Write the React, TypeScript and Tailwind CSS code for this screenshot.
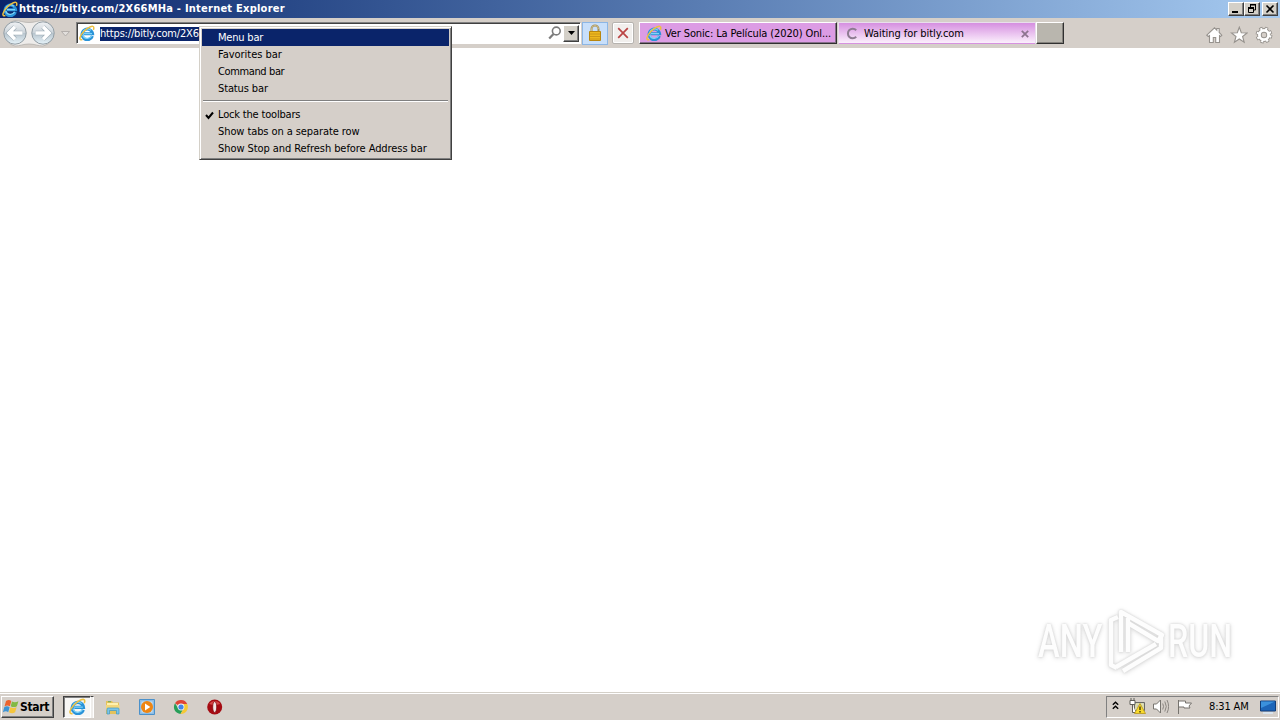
import { ReactNode } from "react";
import clsx from "clsx";

const toolbarItems = [
  { label: "Menu bar", tracking: "tracking-[-0.2px]" },
  { label: "Favorites bar", tracking: "tracking-[-0.03px]" },
  { label: "Command bar", tracking: "tracking-[-0.38px]" },
  { label: "Status bar", tracking: "tracking-[-0.12px]" },
];

const layoutItems = [
  { label: "Lock the toolbars", checked: true, tracking: "tracking-[-0.18px]" },
  { label: "Show tabs on a separate row", checked: false, tracking: "tracking-[-0.09px]" },
  { label: "Show Stop and Refresh before Address bar", checked: false, tracking: "tracking-[-0.07px]" },
];

function IeLogo({ size = 16 }: { size?: number }) {
  return (
    <svg width={size} height={size} viewBox="0 0 16 16" fill="none" className="shrink-0">
      <path d="M13.4 11A5.3 5.3 0 1 1 13.6 8.8H5" stroke="#2a93d8" strokeWidth="3" />
      <path d="M12.6 11A4.9 4.9 0 0 1 3.7 10M3.7 7.6a4.9 4.9 0 0 1 8.2-2.3M5 8.6h8" stroke="#7fd3f7" strokeWidth="1.3" />
      <path d="M3.4 14.6C-.6 15.6.5 10.9 4.8 6.4 9 2 14.9-.5 14.8 2.9c0 .7-.2 1.4-.5 2" stroke="#edc040" strokeWidth="1.5" />
    </svg>
  );
}

function CaptionButton({ children }: { children: ReactNode }) {
  return (
    <button className="flex h-[14px] w-4 items-center justify-center border border-t-white border-l-white border-r-[#404040] border-b-[#404040] bg-[#d4d0c8] shadow-[inset_-1px_-1px_#808080]">
      <svg width="14" height="12" viewBox="0 0 14 12" fill="none" stroke="#000" className="shrink-0">
        {children}
      </svg>
    </button>
  );
}

function TitleBar() {
  return (
    <header className="flex h-[18px] items-center justify-between bg-linear-to-r from-[#0a246a] to-[#a6caf0] pr-[2px] pl-[2px]">
      <div className="flex items-center gap-[1px]">
        <IeLogo />
        <h1 className="font-['DejaVu_Sans_Condensed','DejaVu_Sans',sans-serif] text-[11px] leading-[18px] font-bold tracking-[0.24px] whitespace-nowrap text-white">
          https://bitly.com/2X66MHa - Internet Explorer
        </h1>
      </div>
      <div className="flex">
        <CaptionButton>
          <path d="M3 9h6" strokeWidth="2" />
        </CaptionButton>
        <CaptionButton>
          <path d="M5 2h6M5 1.5h6M10.5 2v5H9M5.5 2v2M3 4.5h6M3 5.5h6M3.5 5v4.5h5V5" />
        </CaptionButton>
        <div className="ml-[2px]">
          <CaptionButton>
            <path d="M3.5 2.5l7 7M10.5 2.5l-7 7" strokeWidth="1.6" />
          </CaptionButton>
        </div>
      </div>
    </header>
  );
}

function NavButtons() {
  return (
    <svg width="72" height="30" viewBox="0 0 72 30" fill="none" className="shrink-0">
      <defs>
        <linearGradient id="orb" x1="0" y1="0" x2="0" y2="1">
          <stop offset="0" stopColor="#f0f2f4" />
          <stop offset=".48" stopColor="#ccd4da" />
          <stop offset=".52" stopColor="#b9c6cf" />
          <stop offset="1" stopColor="#e6f3f9" />
        </linearGradient>
      </defs>
      <path d="M15 2.5c5 0 8 2 14 2s9-2 14-2a13 13 0 0 1 0 25.5c-5 0-8-2-14-2s-9 2-14 2A13 13 0 0 1 15 2.5z" fill="#eeecea" stroke="#b4b1ad" strokeWidth=".8" />
      <circle cx="15" cy="15" r="11.2" fill="url(#orb)" stroke="#939ea5" />
      <circle cx="43" cy="15" r="11.2" fill="url(#orb)" stroke="#939ea5" />
      <path d="M22.5 15H10M15 8.8L8.8 15l6.2 6.2" stroke="#9aa9b3" strokeWidth="4.6" />
      <path d="M22.5 15H10M15 8.8L8.8 15l6.2 6.2" stroke="#fff" strokeWidth="3.4" />
      <path d="M35.5 15H48M43 8.8l6.2 6.2-6.2 6.2" stroke="#9aa9b3" strokeWidth="4.6" />
      <path d="M35.5 15H48M43 8.8l6.2 6.2-6.2 6.2" stroke="#fff" strokeWidth="3.4" />
      <path d="M61.5 13.5h8L65.5 18z" fill="#e2dfdc" stroke="#aaa5a2" strokeWidth=".8" />
    </svg>
  );
}

function AddressBar() {
  return (
    <div className="ml-[4px] flex h-[22px] w-[505px] shrink-0 items-center border border-t-[#808080] border-l-[#808080] border-r-white border-b-white bg-white pr-[1px] pl-[2px] shadow-[inset_1px_1px_#404040]">
      <IeLogo />
      <div className="ml-[5px] flex flex-1">
        <span className="mt-[1px] h-[14px] bg-[#0a246a] text-[11px] leading-[14px] tracking-[-0.17px] whitespace-nowrap text-white">
          https://bitly.com/2X66MHa
        </span>
      </div>
      <svg width="16" height="16" viewBox="0 0 16 16" fill="none" stroke="#7c7c7c">
        <circle cx="9.3" cy="6" r="3.9" strokeWidth="1.6" />
        <path d="M6.5 9l-4.3 4.5" strokeWidth="2.2" />
      </svg>
      <div className="flex h-[17px] w-4 items-center justify-center border border-t-white border-l-white border-r-[#404040] border-b-[#404040] bg-[#d4d0c8] shadow-[inset_-1px_-1px_#808080]">
        <svg width="7" height="4" viewBox="0 0 7 4">
          <path d="M0 0h7L3.5 4z" fill="#000" />
        </svg>
      </div>
    </div>
  );
}

function Toolbar() {
  return (
    <nav className="flex h-[30px] items-center bg-[#d5cfc9]">
      <NavButtons />
      <AddressBar />
      <button className="ml-[1px] flex h-[23px] w-[26px] items-center justify-center border border-[#8cb6e5] bg-[#c8dffa]">
        <svg width="16" height="18" viewBox="0 0 16 18" fill="none">
          <path d="M4.5 9V5a3.5 3.5 0 0 1 7 0v4" stroke="#a48f55" strokeWidth="2" />
          <path d="M4.5 9V5a3.5 3.5 0 0 1 7 0" stroke="#ddd0a2" strokeWidth=".7" />
          <path d="M2.5 7.5h11v9h-11z" fill="#edb71e" stroke="#b8860f" />
          <path d="M3 10h10M3 12.5h10M3 15h10" stroke="#c48f18" strokeWidth=".8" />
        </svg>
      </button>
      <button className="ml-[4px] flex h-[22px] w-[22px] items-center justify-center rounded-[2px] border border-[#b6b3af] bg-[#f1efed] shadow-[inset_0_0_0_1px_white]">
        <svg width="14" height="14" viewBox="0 0 14 14" fill="none">
          <path d="M2.2 2.2l9.6 9.6M11.8 2.2l-9.6 9.6" stroke="#ba4444" strokeWidth="1.7" />
        </svg>
      </button>

      {/* Tabs */}
      <div className="ml-[5px] flex text-[11px] text-black">
        <div className="flex h-[22px] w-[198px] items-center border border-t-white border-l-white border-r-[#303030] border-b-[#303030] bg-[#dc9ce4] pl-[6px] shadow-[inset_-1px_-1px_#86708a]">
          <IeLogo />
          <span className="mt-[2px] ml-[3px] tracking-[-0.12px] whitespace-nowrap">Ver Sonic: La Película (2020) Onl...</span>
        </div>
        <div className="ml-[1px] flex h-[22px] w-[198px] items-center border border-[#e9dfec] border-b-transparent bg-linear-to-b from-[#d58fe0] to-[#fbf0fc] pl-[7px]">
          <svg width="13" height="13" viewBox="0 0 13 13" fill="none">
            <path d="M10.2 3.2a4.8 4.8 0 1 0 0 6.6" stroke="#8d7b91" strokeWidth="2" />
          </svg>
          <span className="mt-[2px] ml-[5px] flex-1 tracking-[-0.06px]">Waiting for bitly.com</span>
          <svg width="8" height="8" viewBox="0 0 8 8" className="mt-[1px] mr-[6px]">
            <path d="M.8.8l6.4 6.4M7.2.8L.8 7.2" stroke="#8d748f" strokeWidth="1.8" />
          </svg>
        </div>
        <div className="h-[22px] w-[28px] border border-t-white border-l-white border-r-[#303030] border-b-[#303030] bg-[#b9b6ae] shadow-[inset_-1px_-1px_#85827d]" />
      </div>

      <div className="mt-[4px] mr-[7px] ml-auto flex gap-[7px]">
        <svg width="18" height="18" viewBox="0 0 18 18" fill="#fff" stroke="#96928d" strokeWidth="1.1">
          <path d="M1.8 9.2L9.5 1.8l2.3 2.3V2.5h2.4v4l2.6 2.7-1.2 1.3-1.1-.9v6.9h-3.8v-5H8.3v5H4.5V9.6l-1.2.9z" />
        </svg>
        <svg width="18" height="18" viewBox="0 0 18 18" fill="#fff" stroke="#96928d" strokeWidth="1.1">
          <path d="M9.3 1.2l2 5.5 5.9.2-4.6 3.6 1.6 5.8-4.9-3.3-4.9 3.3L6 10.5 1.4 6.9l5.9-.2z" />
        </svg>
        <svg width="18" height="18" viewBox="0 0 18 18" fill="none">
          <circle cx="9" cy="9" r="6.4" stroke="#96928d" strokeWidth="4" strokeDasharray="2.9 2.13" />
          <circle cx="9" cy="9" r="4.6" stroke="#96928d" strokeWidth="4.6" />
          <circle cx="9" cy="9" r="6.2" stroke="#fff" strokeWidth="2.6" strokeDasharray="1.9 2.97" strokeDashoffset="-.5" />
          <circle cx="9" cy="9" r="4.6" stroke="#fff" strokeWidth="2.8" />
        </svg>
      </div>
    </nav>
  );
}

function ContextMenu() {
  return (
    <div className="absolute top-[26px] left-[199px] h-[134px] w-[253px] border border-t-[#d4d0c8] border-l-[#d4d0c8] border-r-[#404040] border-b-[#404040] bg-[#d5cfc9] p-[2px] text-[11px] leading-[17px] text-black shadow-[inset_1px_1px_white,inset_-1px_-1px_#808080]">
      {toolbarItems.map((item, i) => (
        <div
          key={item.label}
          className={clsx("h-[17px] pl-[16px] whitespace-nowrap", item.tracking, i === 0 && "bg-[#0a246a] text-white")}
        >
          {item.label}
        </div>
      ))}
      <div className="mx-[1px] mt-[3px] mb-[4px] h-[2px] border-t border-b border-t-[#808080] border-b-white" />
      {layoutItems.map((item) => (
        <div key={item.label} className={clsx("flex h-[17px] items-center whitespace-nowrap", item.tracking)}>
          <span className="w-[16px] pl-[3px]">
            {item.checked && (
              <svg width="9" height="9" viewBox="0 0 9 9" className="mt-[2px]">
                <path d="M1 4l2.5 3L8 1.5" fill="none" stroke="#000" strokeWidth="2" />
              </svg>
            )}
          </span>
          {item.label}
        </div>
      ))}
    </div>
  );
}

function Watermark() {
  return (
    <div className="absolute top-[606px] left-[1038px] flex h-[70px] items-center font-['Roboto','Liberation_Sans',sans-serif] text-[46px] leading-[70px] font-medium text-[#fdfdfd] [filter:drop-shadow(0_0_1px_#d2d2d2)_drop-shadow(0_1px_2px_#dedede)]">
      <span className="w-[68px]">
        <span className="inline-block origin-left scale-x-[0.71]">ANY</span>
      </span>
      <svg width="62" height="68" viewBox="0 0 62 68" fill="none" stroke="#fdfdfd" strokeWidth="4.4" strokeLinejoin="round">
        <path d="M12 10L5 13v45l6 3" />
        <path d="M15 45V5l41 23-4 6-30-18" />
        <path d="M22 11v34M10 60l40-23M17 64l38-23V28" />
      </svg>
      <span className="w-[67px]">
        <span className="inline-block origin-left scale-x-[0.7]">RUN</span>
      </span>
    </div>
  );
}

function WindowsFlag() {
  return (
    <svg width="16" height="16" viewBox="0 0 16 16" className="shrink-0">
      <path d="M3 2q3-2 5.3 0L6.9 7.2q-2.7-1.6-5.4.2z" fill="#ed632d" />
      <path d="M9 2.5q3 1.5 6.4-.3L13.9 7.2q-3.2 1.7-6.2 0z" fill="#83b944" />
      <path d="M1.2 8.2q2.8-1.7 5.4 0L5.2 13.2q-2.2-1.8-5.3.1z" fill="#3e94d4" />
      <path d="M7.4 8.3q3 1.6 6.2 0l-1.5 5q-3 1.7-6.1 0z" fill="#f5c53d" />
    </svg>
  );
}

function Taskbar() {
  return (
    <footer className="flex h-[28px] items-center border-t border-[#d4d0c8] bg-[#d5cfc9] shadow-[inset_0_1px_white]">
      <button className="ml-[1px] flex h-[22px] w-[53px] items-center gap-[1px] border border-t-white border-l-white border-r-[#404040] border-b-[#404040] pl-[1px] font-['DejaVu_Sans_Condensed','DejaVu_Sans',sans-serif] text-[12px] font-bold tracking-[-0.35px] text-black shadow-[inset_-1px_-1px_#808080]">
        <WindowsFlag />
        Start
      </button>
      <div className="ml-[9px] flex h-[22px] w-[28px] items-center justify-center border border-t-[#404040] border-l-[#404040] border-r-white border-b-white bg-[#f7f6f4] shadow-[inset_1px_1px_#808080]">
        <IeLogo size={17} />
      </div>
      <div className="h-[22px] w-[3px] border-t border-r border-t-[#404040] border-r-white bg-[#efedeb]" />

      <div className="ml-[11px] flex gap-[18px]">
        <svg width="16" height="16" viewBox="0 0 16 16">
          <path d="M1 2h6l1 1.5h6V15H1z" fill="#e4c25b" />
          <path d="M2 4h11v7H2z" fill="#fff1ae" />
          <path d="M1 6h13.5v5H1z" fill="#f3d77b" />
          <path d="M2 15V10q0-1 1-1h10q1 0 1 1v5h-2.5v-3.5h-7V15z" fill="#7cc4e7" stroke="#3d98c6" strokeWidth=".7" />
          <path d="M3 2.7h3" stroke="#65a867" />
        </svg>
        <svg width="16" height="16" viewBox="0 0 16 16">
          <path d="M.5.5h15v15H.5z" fill="#8dbde5" stroke="#4b91ca" />
          <path d="M2.5 2.5h11v11h-11z" fill="#c8e2f5" />
          <circle cx="8" cy="8" r="6" fill="#ee8512" />
          <path d="M6 4.5v7L11.3 8z" fill="#fff" />
        </svg>
        <svg width="16" height="16" viewBox="0 0 16 16">
          <path d="M8 8L2 4.3A7 7 0 0 1 14.2 5H8z" fill="#df4435" />
          <path d="M2 4.3A7 7 0 0 0 7.5 15l3-5.5L8 8 5.4 9.7z" fill="#279e58" />
          <path d="M14.2 5A7 7 0 0 1 7.5 15l3.5-6L9 5z" fill="#f5c935" />
          <circle cx="8" cy="8" r="3.4" fill="#f5f5f5" />
          <circle cx="8" cy="8" r="2.6" fill="#4285e8" />
        </svg>
        <svg width="16" height="16" viewBox="0 0 16 16">
          <circle cx="7.7" cy="8" r="7.5" fill="#a50b12" />
          <path d="M2.2 5a6.5 6.5 0 0 1 11 0Q7.7 7 2.2 5z" fill="#d54747" />
          <ellipse cx="7.7" cy="8" rx="2" ry="5.5" fill="#f4e9e7" stroke="#780007" strokeWidth=".7" />
        </svg>
      </div>

      {/* Notification area */}
      <div className="mr-[1px] ml-auto flex h-[22px] w-[173px] items-center border border-t-[#808080] border-l-[#808080] border-r-white border-b-white pl-[5px]">
        <svg width="7" height="9" viewBox="0 0 7 9" fill="none" stroke="#000" strokeWidth="1.4" className="mb-[3px]">
          <path d="M.8 3.8l2.7-2.6 2.7 2.6M.8 7.8l2.7-2.6 2.7 2.6" />
        </svg>
        <svg width="17" height="17" viewBox="0 0 17 17" fill="none" className="ml-[10px]">
          <path d="M5.5 4.5h10v8h-10z" fill="#c8c8c0" stroke="#686866" />
          <path d="M7 6h7v5H7z" stroke="#eeeea0" />
          <path d="M1 2.5h5v4H1zM2 2.5V0M5 2.5V0M3.5 6.5v8H7" fill="#fff" stroke="#5f5e59" />
          <path d="M11 5.5l5.5 10h-11z" fill="#f8da2d" stroke="#b89618" strokeWidth=".8" />
          <path d="M11 8.5v3.5M11 13v1.5" stroke="#332b0c" strokeWidth="1.3" />
        </svg>
        <svg width="17" height="17" viewBox="0 0 17 17" fill="none" stroke="#77746f" className="ml-[6px]">
          <path d="M1.5 6h3l4-4v13l-4-4h-3z" fill="#fff" />
          <path d="M10.7 5.5q1.7 3 0 6M12.8 3.5q3 5 0 10M15 2q3.2 6.5 0 13" strokeWidth=".8" />
        </svg>
        <svg width="17" height="17" viewBox="0 0 17 17" fill="#fff" stroke="#76736e" className="ml-[7px]">
          <path d="M2.5 2v14M2.5 3h7v2h6l-2.5 3 1 2H8V9H2.5z" />
        </svg>
        <span className="mt-[2px] ml-[16px] text-[11px] tracking-[-0.15px] whitespace-nowrap text-black">8:31 AM</span>
        <svg width="16" height="14" viewBox="0 0 16 14" className="mr-[2px] ml-auto">
          <path d="M.5 1h15v10H.5z" fill="#1d65b8" stroke="#123d78" />
          <path d="M1 1.5h14L1 8z" fill="#3b91dc" />
          <path d="M3 13h10" stroke="#d8e3ed" strokeWidth="2" />
        </svg>
      </div>
    </footer>
  );
}

export default function App() {
  return (
    <div className="relative flex h-[720px] w-[1280px] flex-col overflow-hidden bg-white font-['DejaVu_Sans_Condensed','DejaVu_Sans',sans-serif]">
      <TitleBar />
      <Toolbar />
      <main className="flex-1 bg-white" />
      <Taskbar />
      <ContextMenu />
      <Watermark />
    </div>
  );
}
